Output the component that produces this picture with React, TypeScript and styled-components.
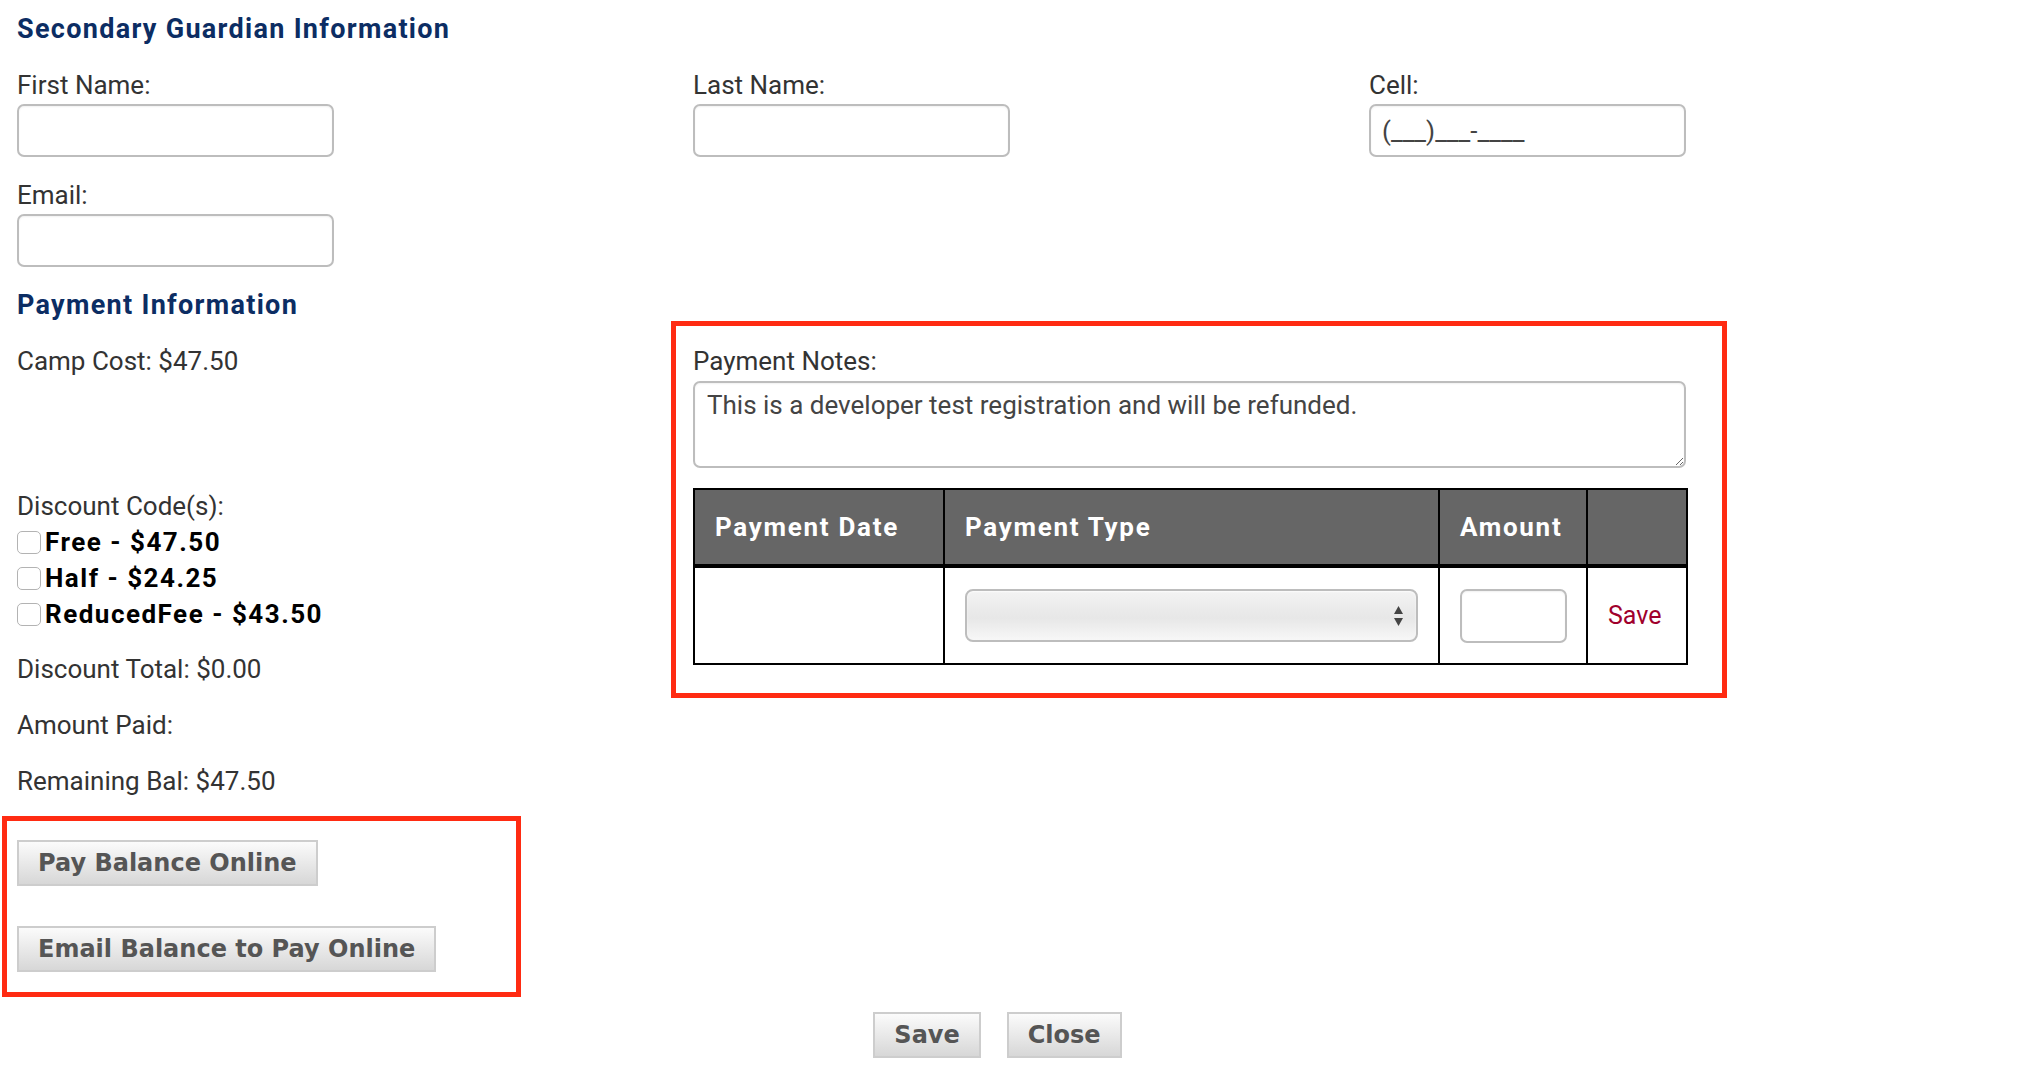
import React from "react";
import styled, { createGlobalStyle } from "styled-components";

const GlobalStyle = createGlobalStyle`
  html, body { margin: 0; padding: 0; background: #fff; }
  body { font-family: Roboto, "Noto Sans", "Liberation Sans", sans-serif; color: #333; }
  *, *::before, *::after { box-sizing: border-box; }
`;

const Page = styled.div`
  padding: 13px 0 13px 17px;
`;

const SectionTitle = styled.h2<{ $top?: number }>`
  margin: ${(p) => p.$top ?? 0}px 0 0;
  font-size: 27px;
  line-height: 32px;
  font-weight: 700;
  letter-spacing: 1.3px;
  color: #0c2d63;
`;

const FieldGrid = styled.div`
  display: grid;
  grid-template-columns: 676px 676px 1fr;
  row-gap: 23px;
  margin-top: 25px;
`;

const Field = styled.div`
  display: flex;
  flex-direction: column;
  gap: 4px;
`;

const Label = styled.label`
  font-size: 26px;
  line-height: 30px;
  color: #333;
`;

const TextInput = styled.input`
  width: 317px;
  height: 53px;
  border: 2px solid #bdbdbd;
  border-radius: 7px;
  box-shadow: inset 0 1px 2px rgba(0, 0, 0, 0.06);
  padding: 0 11px;
  font-family: Roboto, sans-serif;
  font-size: 26px;
  color: #444;
  background: #fff;
  outline: none;
`;

const PaymentGrid = styled.div`
  display: grid;
  grid-template-columns: 676px 1fr;
  align-items: start;
`;

const LeftCol = styled.div`
  display: flex;
  flex-direction: column;
  align-items: flex-start;
  padding-top: 25px;
`;

const InfoLine = styled.div<{ $gap?: number }>`
  margin-top: ${(p) => p.$gap ?? 0}px;
  font-size: 26px;
  line-height: 30px;
  color: #333;
`;

const CheckList = styled.div`
  display: flex;
  flex-direction: column;
  margin-top: 3px;
`;

const CheckRow = styled.label`
  display: flex;
  align-items: center;
  gap: 4px;
  height: 36px;
  font-size: 26px;
  font-weight: 700;
  letter-spacing: 1.5px;
  color: #000;
`;

const Checkbox = styled.input`
  appearance: none;
  -webkit-appearance: none;
  width: 24px;
  height: 23px;
  margin: 0;
  border: 1.5px solid #b3b3b3;
  border-radius: 5px;
  background: #fff;
`;

const Highlight = styled.div`
  border: 5px solid #ff2b12;
`;

const ButtonFrame = styled(Highlight)`
  width: 519px;
  margin: 20px 0 0 -15px;
  padding: 19px 10px 20px;
  display: flex;
  flex-direction: column;
  align-items: flex-start;
  gap: 40px;
`;

const NotesFrame = styled(Highlight)`
  width: fit-content;
  margin-left: -22px;
  padding: 20px 36px 28px 17px;
`;

const NotesInner = styled.div`
  width: 993px;
  display: flex;
  flex-direction: column;
`;

const NotesArea = styled.textarea`
  width: 100%;
  height: 87px;
  margin-top: 5px;
  border: 2px solid #bdbdbd;
  border-radius: 7px;
  box-shadow: inset 0 1px 2px rgba(0, 0, 0, 0.06);
  padding: 7px 12px;
  font-family: Roboto, sans-serif;
  font-size: 26px;
  line-height: 30px;
  color: #444;
  outline: none;
`;

const PayTable = styled.table`
  margin-top: 20px;
  width: 100%;
  border-collapse: collapse;
  table-layout: fixed;
`;

const Th = styled.th`
  height: 77px;
  padding: 0 20px;
  background: #666;
  color: #fff;
  font-size: 26px;
  font-weight: 700;
  letter-spacing: 1.7px;
  text-align: left;
  border: 2px solid #000;
  border-bottom-width: 4px;
`;

const Td = styled.td`
  height: 98px;
  padding: 0 20px;
  border: 2px solid #000;
  vertical-align: middle;
`;

const SelectWrap = styled.div`
  position: relative;
  width: 100%;
`;

const TypeSelect = styled.select`
  appearance: none;
  -webkit-appearance: none;
  width: 100%;
  height: 53px;
  border: 2px solid #bdbdbd;
  border-radius: 8px;
  background: linear-gradient(#f3f3f3, #e7e7e7 55%, #f7f7f7);
  box-shadow: inset 0 1px 2px rgba(255, 255, 255, 0.8);
  font-family: Roboto, sans-serif;
  font-size: 22px;
  outline: none;
`;

const Arrows = styled.svg`
  position: absolute;
  right: 14px;
  top: 50%;
  transform: translateY(-50%);
  pointer-events: none;
`;

const AmountInput = styled(TextInput)`
  width: 107px;
  height: 54px;
`;

const SaveLink = styled.a`
  font-size: 25px;
  color: #a0002c;
  text-decoration: none;
`;

const GreyButton = styled.button`
  height: 46px;
  padding: 0 19px;
  border: 2px solid #cdcdcd;
  border-radius: 0;
  background: linear-gradient(#fbfbfb, #d7d7d7);
  font-family: "DejaVu Sans", Verdana, sans-serif;
  font-size: 24px;
  font-weight: 700;
  color: #555;
  cursor: pointer;
`;

const Footer = styled.div`
  display: flex;
  justify-content: center;
  gap: 26px;
  margin-top: 15px;
  padding-right: 40px;
`;

const discounts = [
  { name: "Free", amount: "$47.50" },
  { name: "Half", amount: "$24.25" },
  { name: "ReducedFee", amount: "$43.50" },
];

export default function App() {
  return (
    <Page>
      <GlobalStyle />
      <SectionTitle>Secondary Guardian Information</SectionTitle>
      <FieldGrid>
        <Field>
          <Label>First Name:</Label>
          <TextInput type="text" />
        </Field>
        <Field>
          <Label>Last Name:</Label>
          <TextInput type="text" />
        </Field>
        <Field>
          <Label>Cell:</Label>
          <TextInput type="text" defaultValue="(___)___-____" />
        </Field>
        <Field>
          <Label>Email:</Label>
          <TextInput type="text" />
        </Field>
      </FieldGrid>

      <SectionTitle $top={22}>Payment Information</SectionTitle>
      <PaymentGrid>
        <LeftCol>
          <InfoLine>Camp Cost: $47.50</InfoLine>
          <InfoLine $gap={115}>Discount Code(s):</InfoLine>
          <CheckList>
            {discounts.map((d) => (
              <CheckRow key={d.name}>
                <Checkbox type="checkbox" />
                {d.name} - {d.amount}
              </CheckRow>
            ))}
          </CheckList>
          <InfoLine $gap={22}>Discount Total: $0.00</InfoLine>
          <InfoLine $gap={26}>Amount Paid:</InfoLine>
          <InfoLine $gap={26}>Remaining Bal: $47.50</InfoLine>
          <ButtonFrame>
            <GreyButton>Pay Balance Online</GreyButton>
            <GreyButton>Email Balance to Pay Online</GreyButton>
          </ButtonFrame>
        </LeftCol>

        <NotesFrame>
          <NotesInner>
            <Label>Payment Notes:</Label>
            <NotesArea defaultValue="This is a developer test registration and will be refunded." />
            <PayTable>
              <colgroup>
                <col style={{ width: 250 }} />
                <col style={{ width: 495 }} />
                <col style={{ width: 148 }} />
                <col style={{ width: 100 }} />
              </colgroup>
              <thead>
                <tr>
                  <Th>Payment Date</Th>
                  <Th>Payment Type</Th>
                  <Th>Amount</Th>
                  <Th></Th>
                </tr>
              </thead>
              <tbody>
                <tr>
                  <Td></Td>
                  <Td>
                    <SelectWrap>
                      <TypeSelect defaultValue="">
                        <option value=""></option>
                      </TypeSelect>
                      <Arrows width="11" height="24" viewBox="0 0 11 24">
                        <path d="M5.5 2 L10 10 L1 10 Z" fill="#444" />
                        <path d="M5.5 22 L10 14 L1 14 Z" fill="#444" />
                      </Arrows>
                    </SelectWrap>
                  </Td>
                  <Td>
                    <AmountInput type="text" />
                  </Td>
                  <Td>
                    <SaveLink href="#">Save</SaveLink>
                  </Td>
                </tr>
              </tbody>
            </PayTable>
          </NotesInner>
        </NotesFrame>
      </PaymentGrid>

      <Footer>
        <GreyButton>Save</GreyButton>
        <GreyButton>Close</GreyButton>
      </Footer>
    </Page>
  );
}
